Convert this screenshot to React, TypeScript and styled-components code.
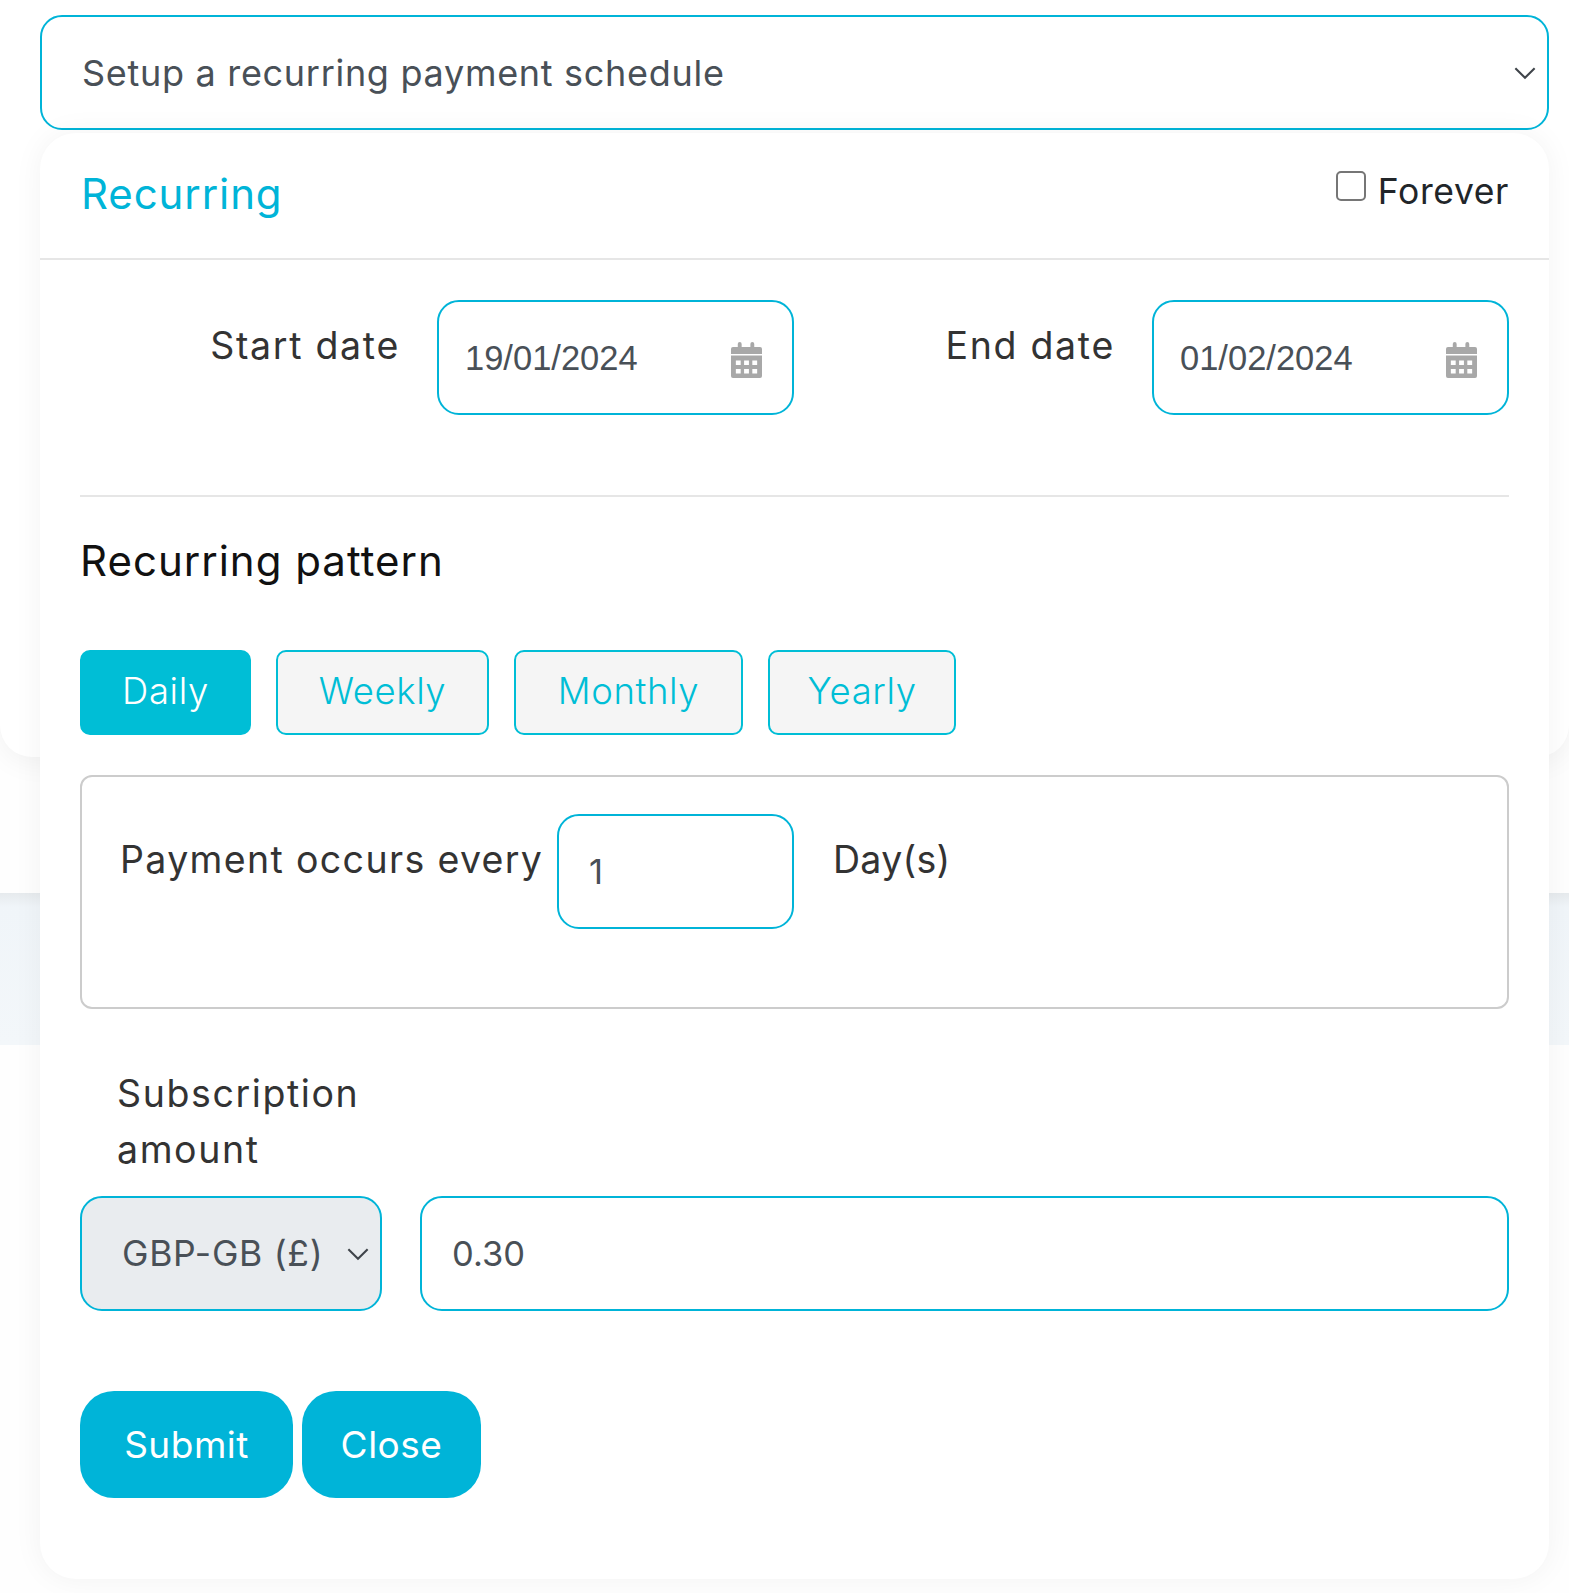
import React from "react";
import styled, { createGlobalStyle } from "styled-components";

const CYAN = "#00b4d8";
const TEAL = "#00bed6";

const GlobalStyle = createGlobalStyle`
  html, body {
    margin: 0;
    padding: 0;
    background: #ffffff;
  }
  * {
    box-sizing: border-box;
  }
  body {
    font-family: Inter, "Liberation Sans", sans-serif;
  }
`;

const Page = styled.div`
  position: relative;
  width: 1569px;
  height: 1593px;
  overflow: hidden;
  background: #fefefe;
`;

const BackPanel = styled.div`
  height: 757px;
  background: #ffffff;
  border-radius: 0 0 32px 32px;
  box-shadow: 0 6px 28px rgba(0, 0, 0, 0.05);
`;

const BackBand = styled.div`
  height: 152px;
  margin-top: 136px;
  background: linear-gradient(#e6eaed, #f0f5f9 14px, #f3f7fa);
`;

const Dropdown = styled.div`
  position: absolute;
  top: 15px;
  left: 40px;
  width: 1509px;
  display: flex;
  flex-direction: column;
  gap: 3px;
`;

const Toggle = styled.div`
  height: 115px;
  display: flex;
  align-items: center;
  justify-content: space-between;
  padding: 0 11px 0 40px;
  background: #ffffff;
  border: 2px solid ${CYAN};
  border-radius: 22px;
  color: #495057;
  font-size: 36px;
  letter-spacing: 0.7px;
`;

const Card = styled.div`
  height: 1446px;
  background: #ffffff;
  border-radius: 36px;
  box-shadow: 0 0 30px rgba(0, 0, 0, 0.05);
`;

const CardHeader = styled.div`
  height: 127px;
  display: flex;
  align-items: flex-start;
  justify-content: space-between;
  padding: 36px 40px 0 41px;
  border-bottom: 2px solid #e6e6e6;
`;

const CardTitle = styled.div`
  color: ${CYAN};
  font-size: 42px;
  line-height: 50px;
  letter-spacing: 0.9px;
`;

const Forever = styled.label`
  display: flex;
  align-items: flex-start;
  gap: 12px;
  margin-top: -3px;
  color: #212529;
  font-size: 35.5px;
  line-height: 51px;
  letter-spacing: 0.6px;
`;

const Check = styled.span`
  width: 30px;
  height: 30px;
  margin-top: 5px;
  background: #ffffff;
  border: 2px solid #767676;
  border-radius: 5px;
`;

const CardBody = styled.div`
  padding: 40px 40px 0;
`;

const DateRow = styled.div`
  display: grid;
  grid-template-columns: 318px 357px 280px 357px;
  column-gap: 39px;
  padding-bottom: 80px;
  border-bottom: 2px solid #e6e6e6;
`;

const RowLabel = styled.div`
  margin-right: -2px;
  padding-top: 21px;
  color: #333333;
  font-size: 37.5px;
  line-height: 50px;
  letter-spacing: 1.7px;
  text-align: right;
`;

const Field = styled.div`
  height: 115px;
  display: flex;
  align-items: center;
  padding: 0 30px 0 26px;
  background: #ffffff;
  border: 2px solid ${CYAN};
  border-radius: 22px;
`;

const DateValue = styled.input`
  flex: 1;
  min-width: 0;
  padding: 2px 0 0;
  border: 0;
  outline: 0;
  background: transparent;
  color: #495057;
  font-family: "Liberation Sans", Arial, sans-serif;
  font-size: 34.5px;
`;

const CalendarWrap = styled.span`
  display: flex;
  margin-top: 5px;
`;

const PatternTitle = styled.h2`
  margin: 36px 0 0;
  color: #111111;
  font-size: 42px;
  font-weight: 400;
  line-height: 56px;
  letter-spacing: 1px;
`;

const Tabs = styled.div`
  display: flex;
  gap: 25px;
  margin-top: 61px;
`;

const Tab = styled.button<{ $active?: boolean; $width: number }>`
  height: 85px;
  padding: 0 0 3px;
  width: ${(p) => p.$width}px;
  background: ${(p) => (p.$active ? TEAL : "#f5f5f5")};
  border: 2px solid ${TEAL};
  border-radius: 10px;
  color: ${(p) => (p.$active ? "#ffffff" : TEAL)};
  font-family: inherit;
  font-size: 36.5px;
  font-weight: 300;
  letter-spacing: 0.6px;
`;

const PatternBox = styled.div`
  height: 234px;
  margin-top: 40px;
  display: flex;
  align-items: flex-start;
  padding: 37px 38px;
  border: 2px solid #cccccc;
  border-radius: 12px;
`;

const BoxLabel = styled.div`
  width: 437px;
  padding-top: 21px;
  color: #333333;
  font-size: 37.5px;
  line-height: 50px;
  letter-spacing: 1.35px;
  white-space: nowrap;
`;

const EveryField = styled(Field)`
  width: 237px;
  flex: none;
  padding-left: 30px;
`;

const UnitLabel = styled(BoxLabel)`
  width: auto;
  margin-left: 39px;
  letter-spacing: 0.3px;
`;

const PlainValue = styled.input`
  width: 100%;
  padding: 0;
  border: 0;
  outline: 0;
  background: transparent;
  color: #495057;
  font-family: inherit;
  font-size: 34.5px;
`;

const AmountLabel = styled.div`
  width: 320px;
  margin: 57px 0 0 37px;
  color: #333333;
  font-size: 37.5px;
  line-height: 56px;
  letter-spacing: 1.6px;
`;

const AmountRow = styled.div`
  display: flex;
  gap: 38px;
  margin-top: 18px;
`;

const CurrencySelect = styled.div`
  width: 302px;
  height: 115px;
  flex: none;
  display: flex;
  align-items: center;
  justify-content: space-between;
  padding: 0 11px 0 40px;
  background: #e9ecef;
  border: 2px solid ${CYAN};
  border-radius: 22px;
  color: #495057;
  font-size: 35.5px;
  letter-spacing: 0.7px;
  white-space: nowrap;
`;

const AmountField = styled(Field)`
  flex: 1;
  padding-left: 30px;
`;

const Actions = styled.div`
  display: flex;
  gap: 9px;
  margin-top: 80px;
`;

const ActionButton = styled.button<{ $width: number }>`
  height: 107px;
  width: ${(p) => p.$width}px;
  padding: 0;
  background: ${CYAN};
  border: 0;
  border-radius: 34px;
  color: #ffffff;
  font-family: inherit;
  font-size: 37px;
  letter-spacing: 0.5px;
`;

function Chevron({ size = 22 }: { size?: number }) {
  return (
    <svg width={size} height={size} viewBox="0 0 16 16" fill="none">
      <path d="m1 4.5 7 7 7-7" stroke="#3f444a" strokeWidth="1.5" />
    </svg>
  );
}

function CalendarIcon() {
  return (
    <CalendarWrap>
      <svg width="31" height="36" viewBox="0 0 32 36" preserveAspectRatio="none" fill="#a8a8a8">
        <rect x="7" y="0" width="4" height="8" rx="2" />
        <rect x="20" y="0" width="4" height="8" rx="2" />
        <path d="M2 5h28a2 2 0 0 1 2 2v5H0V7a2 2 0 0 1 2-2z" />
        <path d="M0 13.5h32V34a2 2 0 0 1-2 2H2a2 2 0 0 1-2-2z" />
        <g fill="#ffffff">
          <rect x="5" y="18.5" width="5" height="4.5" />
          <rect x="13.5" y="18.5" width="5" height="4.5" />
          <rect x="22" y="18.5" width="5" height="4.5" />
          <rect x="5" y="27" width="5" height="4.5" />
          <rect x="13.5" y="27" width="5" height="4.5" />
          <rect x="22" y="27" width="5" height="4.5" />
        </g>
      </svg>
    </CalendarWrap>
  );
}

const tabs = [
  { label: "Daily", width: 171, active: true },
  { label: "Weekly", width: 213 },
  { label: "Monthly", width: 229 },
  { label: "Yearly", width: 188 },
];

export default function App() {
  return (
    <Page>
      <GlobalStyle />
      <BackPanel />
      <BackBand />
      <Dropdown>
        <Toggle>
          <span>Setup a recurring payment schedule</span>
          <Chevron />
        </Toggle>
        <Card>
          <CardHeader>
            <CardTitle>Recurring</CardTitle>
            <Forever>
              <Check />
              Forever
            </Forever>
          </CardHeader>
          <CardBody>
            <DateRow>
              <RowLabel>Start date</RowLabel>
              <Field>
                <DateValue readOnly value="19/01/2024" />
                <CalendarIcon />
              </Field>
              <RowLabel>End date</RowLabel>
              <Field>
                <DateValue readOnly value="01/02/2024" />
                <CalendarIcon />
              </Field>
            </DateRow>
            <PatternTitle>Recurring pattern</PatternTitle>
            <Tabs>
              {tabs.map((t) => (
                <Tab key={t.label} $active={t.active} $width={t.width}>
                  {t.label}
                </Tab>
              ))}
            </Tabs>
            <PatternBox>
              <BoxLabel>Payment occurs every</BoxLabel>
              <EveryField>
                <PlainValue readOnly value="1" />
              </EveryField>
              <UnitLabel>Day(s)</UnitLabel>
            </PatternBox>
            <AmountLabel>Subscription amount</AmountLabel>
            <AmountRow>
              <CurrencySelect>
                <span>GBP-GB (£)</span>
                <Chevron />
              </CurrencySelect>
              <AmountField>
                <PlainValue readOnly value="0.30" />
              </AmountField>
            </AmountRow>
            <Actions>
              <ActionButton $width={213}>Submit</ActionButton>
              <ActionButton $width={179}>Close</ActionButton>
            </Actions>
          </CardBody>
        </Card>
      </Dropdown>
    </Page>
  );
}
